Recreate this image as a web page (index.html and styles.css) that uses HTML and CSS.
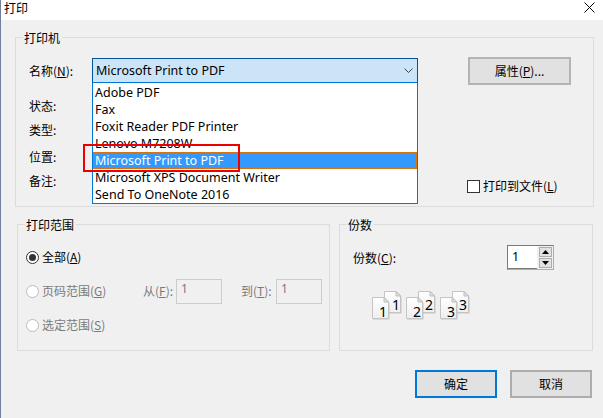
FILE: index.html
```html
<!DOCTYPE html>
<html lang="zh-CN">
<head>
<meta charset="utf-8">
<title>打印</title>
<link rel="stylesheet" href="styles.css">
</head>
<body>
<div class="dialog">
  <header class="titlebar">
    <span>打印</span>
    <svg class="close" width="11" height="11" viewBox="0 0 11 11"><path d="M0.5 0.5L10.5 10.5M10.5 0.5L0.5 10.5"/></svg>
  </header>
  <main class="content">
    <section class="group printer">
      <div class="legend">打印机</div>
      <div class="name-row">
        <label class="name-label">名称(<u>N</u>):</label>
        <div class="combo">
          <span>Microsoft Print to PDF</span>
          <svg class="chevron" width="9" height="5" viewBox="0 0 9 5"><path d="M0.5 0.5L4.5 4.5L8.5 0.5"/></svg>
          <ul class="dropdown">
            <li>Adobe PDF</li>
            <li>Fax</li>
            <li>Foxit Reader PDF Printer</li>
            <li>Lenovo M7208W</li>
            <li class="selected">Microsoft Print to PDF</li>
            <li>Microsoft XPS Document Writer</li>
            <li>Send To OneNote 2016</li>
          </ul>
        </div>
        <button class="btn props">属性(<u>P</u>)...</button>
      </div>
      <div class="info-row info-status">状态:</div>
      <div class="info-row info-type">类型:</div>
      <div class="info-row info-where">位置:</div>
      <div class="info-row info-note">
        <span class="note-label">备注:</span>
        <div class="file-option">
          <span class="checkbox"></span>
          <span>打印到文件(<u>L</u>)</span>
        </div>
      </div>
    </section>
    <div class="lower">
      <section class="group range">
        <div class="legend">打印范围</div>
        <div class="option">
          <span class="radio checked"></span><span>全部(<u>A</u>)</span>
        </div>
        <div class="option disabled">
          <span class="radio"></span><span class="option-text">页码范围(<u>G</u>)</span>
          <span class="from-label">从(<u>F</u>):</span><span class="num-box">1</span>
          <span class="to-label">到(<u>T</u>):</span><span class="num-box">1</span>
        </div>
        <div class="option disabled">
          <span class="radio"></span><span>选定范围(<u>S</u>)</span>
        </div>
      </section>
      <section class="group copies">
        <div class="legend">份数</div>
        <div class="copies-row">
          <label class="copies-label">份数(<u>C</u>):</label>
          <div class="spin">
            <span class="spin-value">1</span>
            <div class="spin-btns">
              <span class="spin-btn"><svg width="7" height="4" viewBox="0 0 7 4"><path d="M3.5 0L7 4H0Z"/></svg></span>
              <span class="spin-btn"><svg width="7" height="4" viewBox="0 0 7 4"><path d="M0 0H7L3.5 4Z"/></svg></span>
            </div>
          </div>
        </div>
        <svg class="collate" width="100" height="32" viewBox="0 0 100 32">
          <defs>
            <linearGradient id="paper" x1="0" y1="0" x2="0" y2="1">
              <stop offset="0" stop-color="#ffffff"/>
              <stop offset="1" stop-color="#eeeeee"/>
            </linearGradient>
            <g id="page">
              <path class="page-shadow" d="M1 1H13L17.5 6V22.5H1Z"/>
              <path class="page-body" d="M0.5 0.5H12L16.5 5V21.5H0.5Z" fill="url(#paper)"/>
              <path class="page-ear" d="M12 0.5V5H16.5Z"/>
            </g>
          </defs>
          <use href="#page" x="14" y="1"/>
          <text class="page-num" x="22" y="20">1</text>
          <use href="#page" x="2" y="7"/>
          <text class="page-num" x="9" y="27">1</text>
          <use href="#page" x="48" y="1"/>
          <text class="page-num" x="55" y="20">2</text>
          <use href="#page" x="36" y="7"/>
          <text class="page-num" x="43" y="27">2</text>
          <use href="#page" x="82" y="1"/>
          <text class="page-num" x="89" y="20">3</text>
          <use href="#page" x="70" y="7"/>
          <text class="page-num" x="77" y="27">3</text>
        </svg>
      </section>
    </div>
    <footer class="actions">
      <button class="btn action default">确定</button>
      <button class="btn action">取消</button>
    </footer>
  </main>
  <div class="annotation"></div>
</div>
</body>
</html>
```
FILE: styles.css
```css
* { box-sizing: border-box; }
html, body { margin: 0; padding: 0; }
body {
  width: 603px;
  height: 418px;
  overflow: hidden;
  font: 12.5px/16px "Noto Sans", "Noto Sans CJK SC", sans-serif;
  color: #000;
  background: #f0f0f0;
}
.dialog {
  position: relative;
  height: 418px;
  border-left: 1px solid #71809c;
  background: #f0f0f0;
}
.titlebar {
  display: flex;
  justify-content: space-between;
  align-items: flex-start;
  height: 20px;
  padding: 0 8px 0 3px;
  background: #fff;
  font: 12px/16px "Noto Sans CJK SC", sans-serif;
}
.close { margin-top: 2px; }
.close path { stroke: #000; stroke-width: 1; fill: none; }
.content { padding: 17px 9px 0 14px; }

.group {
  position: relative;
  border: 1px solid #dcdcdc;
}
.legend {
  position: absolute;
  top: -8px;
  left: 7px;
  padding: 0 2px 0 1px;
  background: #f0f0f0;
  font: 12px/16px "Noto Sans CJK SC", sans-serif;
}

.printer {
  height: 170px;
  padding: 19px 21px 0 13px;
}
.name-row {
  display: flex;
  align-items: flex-start;
  height: 28px;
}
.name-label {
  width: 63px;
  margin-top: 6px;
  font: 12px/16px "Noto Sans CJK SC", sans-serif;
}
.combo {
  position: relative;
  display: flex;
  justify-content: space-between;
  align-items: center;
  width: 326px;
  height: 25px;
  margin-top: 1px;
  padding: 0 4px 0 3px;
  background: #cce4f7;
  border: 1px solid #005499;
}
.chevron path { stroke: #444; fill: none; }
.dropdown {
  position: absolute;
  top: 23px;
  left: -1px;
  z-index: 2;
  width: 326px;
  height: 122px;
  margin: 0;
  padding: 1px 0 0;
  list-style: none;
  background: #fff;
  border: 1px solid #0078d7;
}
.dropdown li {
  height: 17px;
  padding-left: 2px;
  line-height: 17px;
}
.dropdown .selected {
  background: #3399ff;
  color: #fff;
  outline: 1px dotted #d9730d;
  outline-offset: -1px;
}
.btn {
  font: 12px/16px "Noto Sans CJK SC", sans-serif;
  color: #000;
  background: #e1e1e1;
  border: 1px solid #adadad;
  padding: 0;
}
.props {
  width: 103px;
  height: 28px;
  margin-left: 50px;
  border-width: 2px;
  border-color: #b4b4b4;
}
.info-row {
  display: flex;
  height: 16px;
  font: 12px/16px "Noto Sans CJK SC", sans-serif;
}
.info-status { margin-top: 13px; }
.info-type { margin-top: 8px; }
.info-where { margin-top: 11px; }
.info-note { margin-top: 8px; }
.note-label { width: 438px; }
.file-option {
  display: flex;
  align-items: center;
  height: 16px;
  margin-top: 5px;
}
.checkbox {
  width: 13px;
  height: 13px;
  margin-right: 3px;
  background: #fff;
  border: 1px solid #333;
}

.lower {
  display: flex;
  margin: 17px 0 0 2px;
}
.range {
  width: 313px;
  height: 127px;
  padding: 15px 0 0 8px;
}
.copies {
  width: 254px;
  height: 127px;
  margin-left: 9px;
  padding: 20px 0 0 13px;
}
.option {
  display: flex;
  align-items: center;
  height: 34px;
  font: 12px/16px "Noto Sans CJK SC", sans-serif;
}
.option.disabled { color: #7a7a7a; }
.radio {
  position: relative;
  flex: none;
  width: 13px;
  height: 13px;
  margin-right: 3px;
  background: #fff;
  border: 1px solid #333;
  border-radius: 50%;
}
.disabled .radio { border-color: #bcbcbc; }
.radio.checked::after {
  content: "";
  position: absolute;
  inset: 2px;
  background: #333;
  border-radius: 50%;
}
.option-text { width: 101px; }
.from-label { width: 33px; }
.to-label { width: 35px; margin-left: 19px; }
.num-box {
  width: 46px;
  height: 25px;
  padding: 1px 0 0 4px;
  border: 1px solid #cccccc;
  font-family: "Noto Sans", sans-serif;
}

.copies-row {
  display: flex;
  align-items: center;
  height: 25px;
}
.copies-label { width: 154px; font: 12px/16px "Noto Sans CJK SC", sans-serif; }
.spin {
  display: flex;
  width: 47px;
  height: 25px;
  border: 1px solid #adadad;
  border-top-color: #7a7a7a;
  border-left-color: #7a7a7a;
  background: #f0f0f0;
}
.spin-value {
  width: 29px;
  padding: 3px 0 0 4px;
  background: #fff;
  border-bottom: 1px solid #7a7a7a;
  color: #000;
}
.spin-btns {
  display: flex;
  flex-direction: column;
  gap: 1px;
  flex: 1;
  padding: 1px 1px 1px 2px;
}
.spin-btn {
  display: flex;
  flex: 1;
  align-items: center;
  justify-content: center;
  background: #e1e1e1;
  border: 1px solid #adadad;
}
.spin-btn path { fill: #000; }
.collate {
  display: block;
  margin: 20px 0 0 17px;
}
.page-body { stroke: #c4c4c4; }
.page-shadow { fill: #c4c4c4; }
.page-ear { fill: #e2e2e2; stroke: #bdbdbd; }
.page-num { font: 14px "Noto Sans", sans-serif; fill: #000; }

.actions {
  display: flex;
  justify-content: flex-end;
  gap: 13px;
  margin-top: 19px;
  padding-right: 2px;
}
.action {
  width: 82px;
  height: 28px;
  border-width: 2px;
}
.action.default { border-color: #0078d7; }

.annotation {
  position: absolute;
  top: 144px;
  left: 82px;
  z-index: 3;
  width: 157px;
  height: 28px;
  border: 2px solid #ee0000;
}
```
